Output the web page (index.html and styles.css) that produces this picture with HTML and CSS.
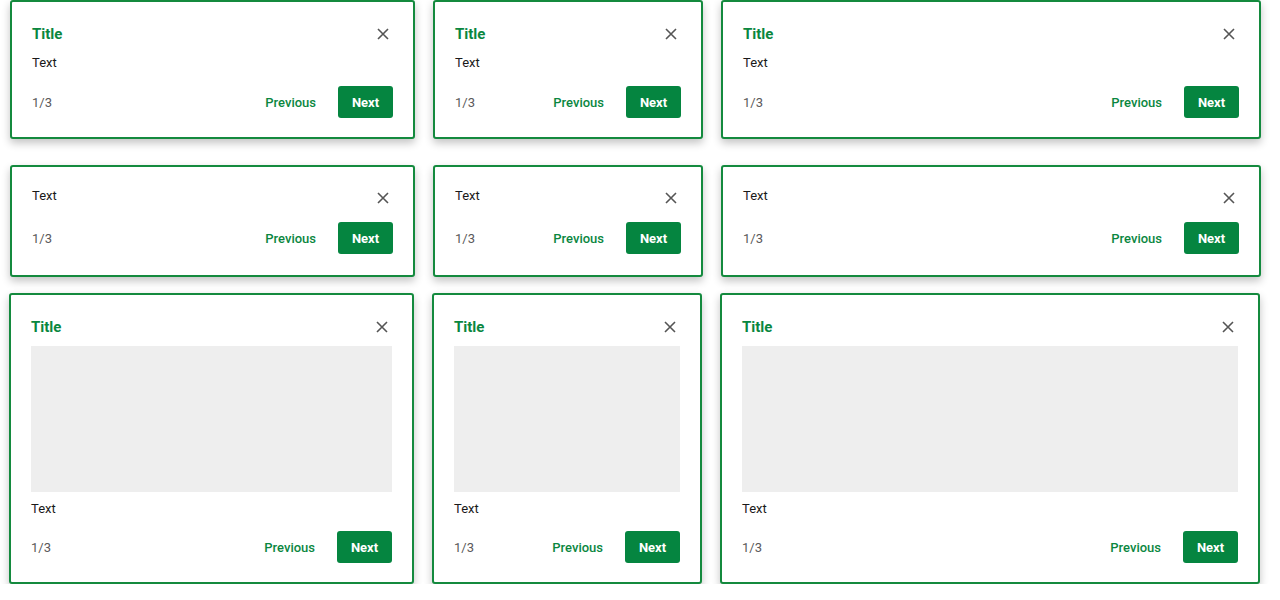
FILE: index.html
```html
<!DOCTYPE html>
<html>
<head>
<meta charset="utf-8">
<link rel="stylesheet" href="styles.css">
</head>
<body>
<div class="page">
  <div class="row row-a">
    <div class="card w-lg basic">
      <div class="head"><span class="title">Title</span><button class="close"><svg viewBox="0 0 12 12" width="12" height="12"><path d="M1 1L11 11M11 1L1 11"/></svg></button></div>
      <p class="text">Text</p>
      <div class="foot"><span class="count">1/3</span><span class="prev">Previous</span><span class="next">Next</span></div>
    </div>
    <div class="card w-md basic">
      <div class="head"><span class="title">Title</span><button class="close"><svg viewBox="0 0 12 12" width="12" height="12"><path d="M1 1L11 11M11 1L1 11"/></svg></button></div>
      <p class="text">Text</p>
      <div class="foot"><span class="count">1/3</span><span class="prev">Previous</span><span class="next">Next</span></div>
    </div>
    <div class="card w-xl basic">
      <div class="head"><span class="title">Title</span><button class="close"><svg viewBox="0 0 12 12" width="12" height="12"><path d="M1 1L11 11M11 1L1 11"/></svg></button></div>
      <p class="text">Text</p>
      <div class="foot"><span class="count">1/3</span><span class="prev">Previous</span><span class="next">Next</span></div>
    </div>
  </div>
  <div class="row row-b">
    <div class="card w-lg compact">
      <div class="head"><span class="text">Text</span><button class="close"><svg viewBox="0 0 12 12" width="12" height="12"><path d="M1 1L11 11M11 1L1 11"/></svg></button></div>
      <div class="foot"><span class="count">1/3</span><span class="prev">Previous</span><span class="next">Next</span></div>
    </div>
    <div class="card w-md compact">
      <div class="head"><span class="text">Text</span><button class="close"><svg viewBox="0 0 12 12" width="12" height="12"><path d="M1 1L11 11M11 1L1 11"/></svg></button></div>
      <div class="foot"><span class="count">1/3</span><span class="prev">Previous</span><span class="next">Next</span></div>
    </div>
    <div class="card w-xl compact">
      <div class="head"><span class="text">Text</span><button class="close"><svg viewBox="0 0 12 12" width="12" height="12"><path d="M1 1L11 11M11 1L1 11"/></svg></button></div>
      <div class="foot"><span class="count">1/3</span><span class="prev">Previous</span><span class="next">Next</span></div>
    </div>
  </div>
  <div class="row row-c">
    <div class="card w-lg media">
      <div class="head"><span class="title">Title</span><button class="close"><svg viewBox="0 0 12 12" width="12" height="12"><path d="M1 1L11 11M11 1L1 11"/></svg></button></div>
      <div class="image"></div>
      <p class="text">Text</p>
      <div class="foot"><span class="count">1/3</span><span class="prev">Previous</span><span class="next">Next</span></div>
    </div>
    <div class="card w-md media">
      <div class="head"><span class="title">Title</span><button class="close"><svg viewBox="0 0 12 12" width="12" height="12"><path d="M1 1L11 11M11 1L1 11"/></svg></button></div>
      <div class="image"></div>
      <p class="text">Text</p>
      <div class="foot"><span class="count">1/3</span><span class="prev">Previous</span><span class="next">Next</span></div>
    </div>
    <div class="card w-xl media">
      <div class="head"><span class="title">Title</span><button class="close"><svg viewBox="0 0 12 12" width="12" height="12"><path d="M1 1L11 11M11 1L1 11"/></svg></button></div>
      <div class="image"></div>
      <p class="text">Text</p>
      <div class="foot"><span class="count">1/3</span><span class="prev">Previous</span><span class="next">Next</span></div>
    </div>
  </div>
</div>
</body>
</html>
```

FILE: styles.css
```css
html, body {
  margin: 0;
  padding: 0;
  background: #ffffff;
  font-family: Roboto, "Liberation Sans", Arial, sans-serif;
}

.page {
  padding: 0 0 0 10px;
}

.row {
  display: flex;
  gap: 18px;
  align-items: flex-start;
}

.row-b {
  margin-top: 26px;
}

.row-c {
  margin-top: 16px;
  margin-left: -1px;
}

.card {
  box-sizing: border-box;
  border: 2px solid #148a3e;
  border-radius: 3px;
  background: #fff;
  padding: 19px 20px 19px 20px;
  box-shadow: 0 4px 8px rgba(0, 0, 0, 0.24);
}

.basic {
  padding-top: 20px;
  padding-bottom: 19px;
}

.compact {
  padding-bottom: 21px;
}

.media {
  padding-top: 20px;
}

.w-lg { width: 405px; }
.w-md { width: 270px; }
.w-xl { width: 540px; }

.head {
  display: flex;
  justify-content: space-between;
  align-items: center;
  height: 24px;
}

.compact .head {
  align-items: flex-start;
}

.title {
  color: #0a873f;
  font-size: 15px;
  font-weight: 700;
  line-height: 20px;
}

.close {
  border: 0;
  background: transparent;
  padding: 0;
  width: 24px;
  height: 24px;
  display: flex;
  align-items: center;
  justify-content: center;
  margin-right: -2px;
  cursor: pointer;
}

.close svg path {
  stroke: #555555;
  stroke-width: 1.6;
  fill: none;
}

.text {
  margin: 7px 0 0 0;
  color: #1a1a1a;
  font-size: 13px;
  line-height: 20px;
}

.compact .head .text {
  margin: 0;
}

.image {
  margin-top: 7px;
  height: 146px;
  background: #eeeeee;
}

.media .text {
  margin-top: 7px;
}

.foot {
  display: flex;
  align-items: center;
  margin-top: 13px;
  height: 32px;
}

.compact .foot {
  margin-top: 12px;
}

.media .foot {
  margin-top: 12px;
}

.count {
  color: #5a5a5a;
  font-size: 13px;
  flex: 1;
}

.prev {
  color: #0a873f;
  font-size: 13px;
  font-weight: 500;
  margin-right: 22px;
}

.next {
  box-sizing: border-box;
  height: 32px;
  width: 55px;
  background: #058540;
  color: #fff;
  border-radius: 3px;
  font-size: 13px;
  font-weight: 700;
  display: flex;
  align-items: center;
  justify-content: center;
}
```
